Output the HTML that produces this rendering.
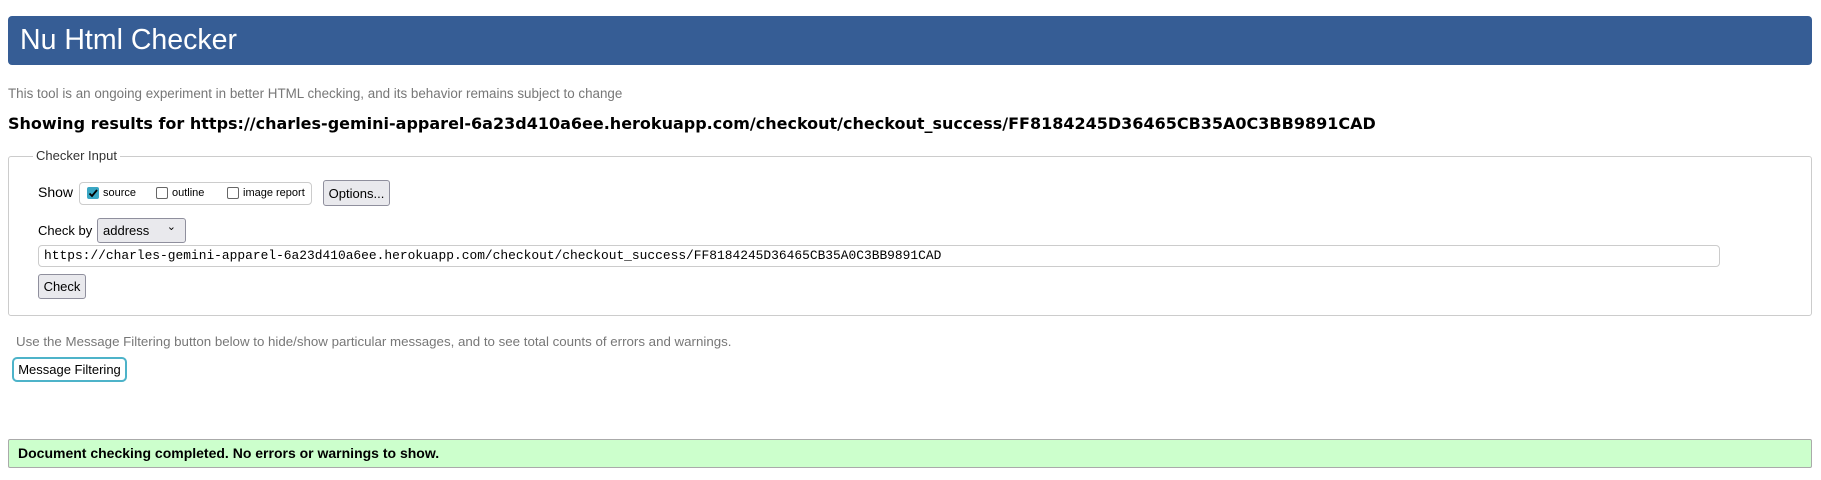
<!DOCTYPE html>
<html><head><meta charset="utf-8"><style>
*{box-sizing:border-box}
body{margin:0;width:1821px;height:480px;background:#fff;font-family:"Liberation Sans",sans-serif;position:relative;overflow:hidden;color:#000}
.abs{position:absolute;white-space:nowrap}
.hdr{left:8px;top:16px;width:1804px;height:49px;background:#365d95;border-radius:4px;color:#fff;font-size:28.5px;line-height:49px;padding-left:12px}
.gray{color:#777;font-size:13px}
.btn{background:#e9e9ed;border:1px solid #8f8f9d;border-radius:3px;font-size:13px;display:flex;align-items:center;justify-content:center}
.cb{position:absolute;top:6px;width:12px;height:12px;border:1px solid #666;border-radius:2px;background:#fff}
.lb{position:absolute;top:4px;font-size:11px}
</style></head><body>
<div class="abs hdr">Nu Html Checker</div>
<div class="abs gray" style="left:8px;top:86px;font-size:13.4px">This tool is an ongoing experiment in better HTML checking, and its behavior remains subject to change</div>
<div class="abs" style="left:8px;top:114px;font-family:'DejaVu Sans',sans-serif;font-weight:bold;font-size:16px">Showing results for https://charles-gemini-apparel-6a23d410a6ee.herokuapp.com/checkout/checkout_success/FF8184245D36465CB35A0C3BB9891CAD</div>
<div class="abs" style="left:8px;top:156px;width:1804px;height:160px;border:1px solid #ccc;border-radius:3px"></div>
<div class="abs" style="left:33px;top:148px;background:#fff;padding:0 3px;font-size:13px;color:#333">Checker Input</div>
<div class="abs" style="left:38px;top:184px;font-size:14px">Show</div>
<div class="abs" style="left:79px;top:182px;width:233px;height:23px;border:1px solid #ccc;border-radius:4px">
<span class="cb" style="left:7px;top:4px;background:#3aa7c4;border-color:#3aa7c4"><svg width="12" height="12" style="position:absolute;left:-1px;top:-1px"><path d="M2.5 6.5l2.5 2.5 5-6" stroke="#000" stroke-width="1.8" fill="none"/></svg></span><span class="lb" style="left:23px">source</span>
<span class="cb" style="left:76px;top:4px"></span><span class="lb" style="left:92px">outline</span>
<span class="cb" style="left:147px;top:4px"></span><span class="lb" style="left:163px">image report</span></div>
<div class="abs btn" style="left:323px;top:180px;width:67px;height:26px">Options...</div>
<div class="abs" style="left:38px;top:223px;font-size:13px">Check by</div>
<div class="abs" style="left:97px;top:218px;width:89px;height:25px;border:1px solid #8f8f9d;border-radius:3px;background:#e9e9ed;font-size:13px;line-height:23px;padding-left:5px">address<span style="position:absolute;right:9px;top:-3px;font-size:11px">&#8964;</span></div>
<div class="abs" style="left:38px;top:245px;width:1682px;height:22px;border:1px solid #ccc;border-radius:4px;font-family:'Liberation Mono',monospace;font-size:12.9px;line-height:20px;padding-left:5px">https://charles-gemini-apparel-6a23d410a6ee.herokuapp.com/checkout/checkout_success/FF8184245D36465CB35A0C3BB9891CAD</div>
<div class="abs btn" style="left:38px;top:274px;width:48px;height:25px">Check</div>
<div class="abs gray" style="left:16px;top:334px;font-size:13.3px">Use the Message Filtering button below to hide/show particular messages, and to see total counts of errors and warnings.</div>
<div class="abs" style="left:12px;top:357px;width:115px;height:25px;border:2px solid #4db3c9;border-radius:5px;font-size:13px;display:flex;align-items:center;justify-content:center">Message Filtering</div>
<div class="abs" style="left:8px;top:439px;width:1804px;height:29px;background:#ccffcc;border:1px solid #aaa;border-radius:2px;font-weight:bold;font-size:14px;line-height:27px;padding-left:9px">Document checking completed. No errors or warnings to show.</div>
</body></html>
